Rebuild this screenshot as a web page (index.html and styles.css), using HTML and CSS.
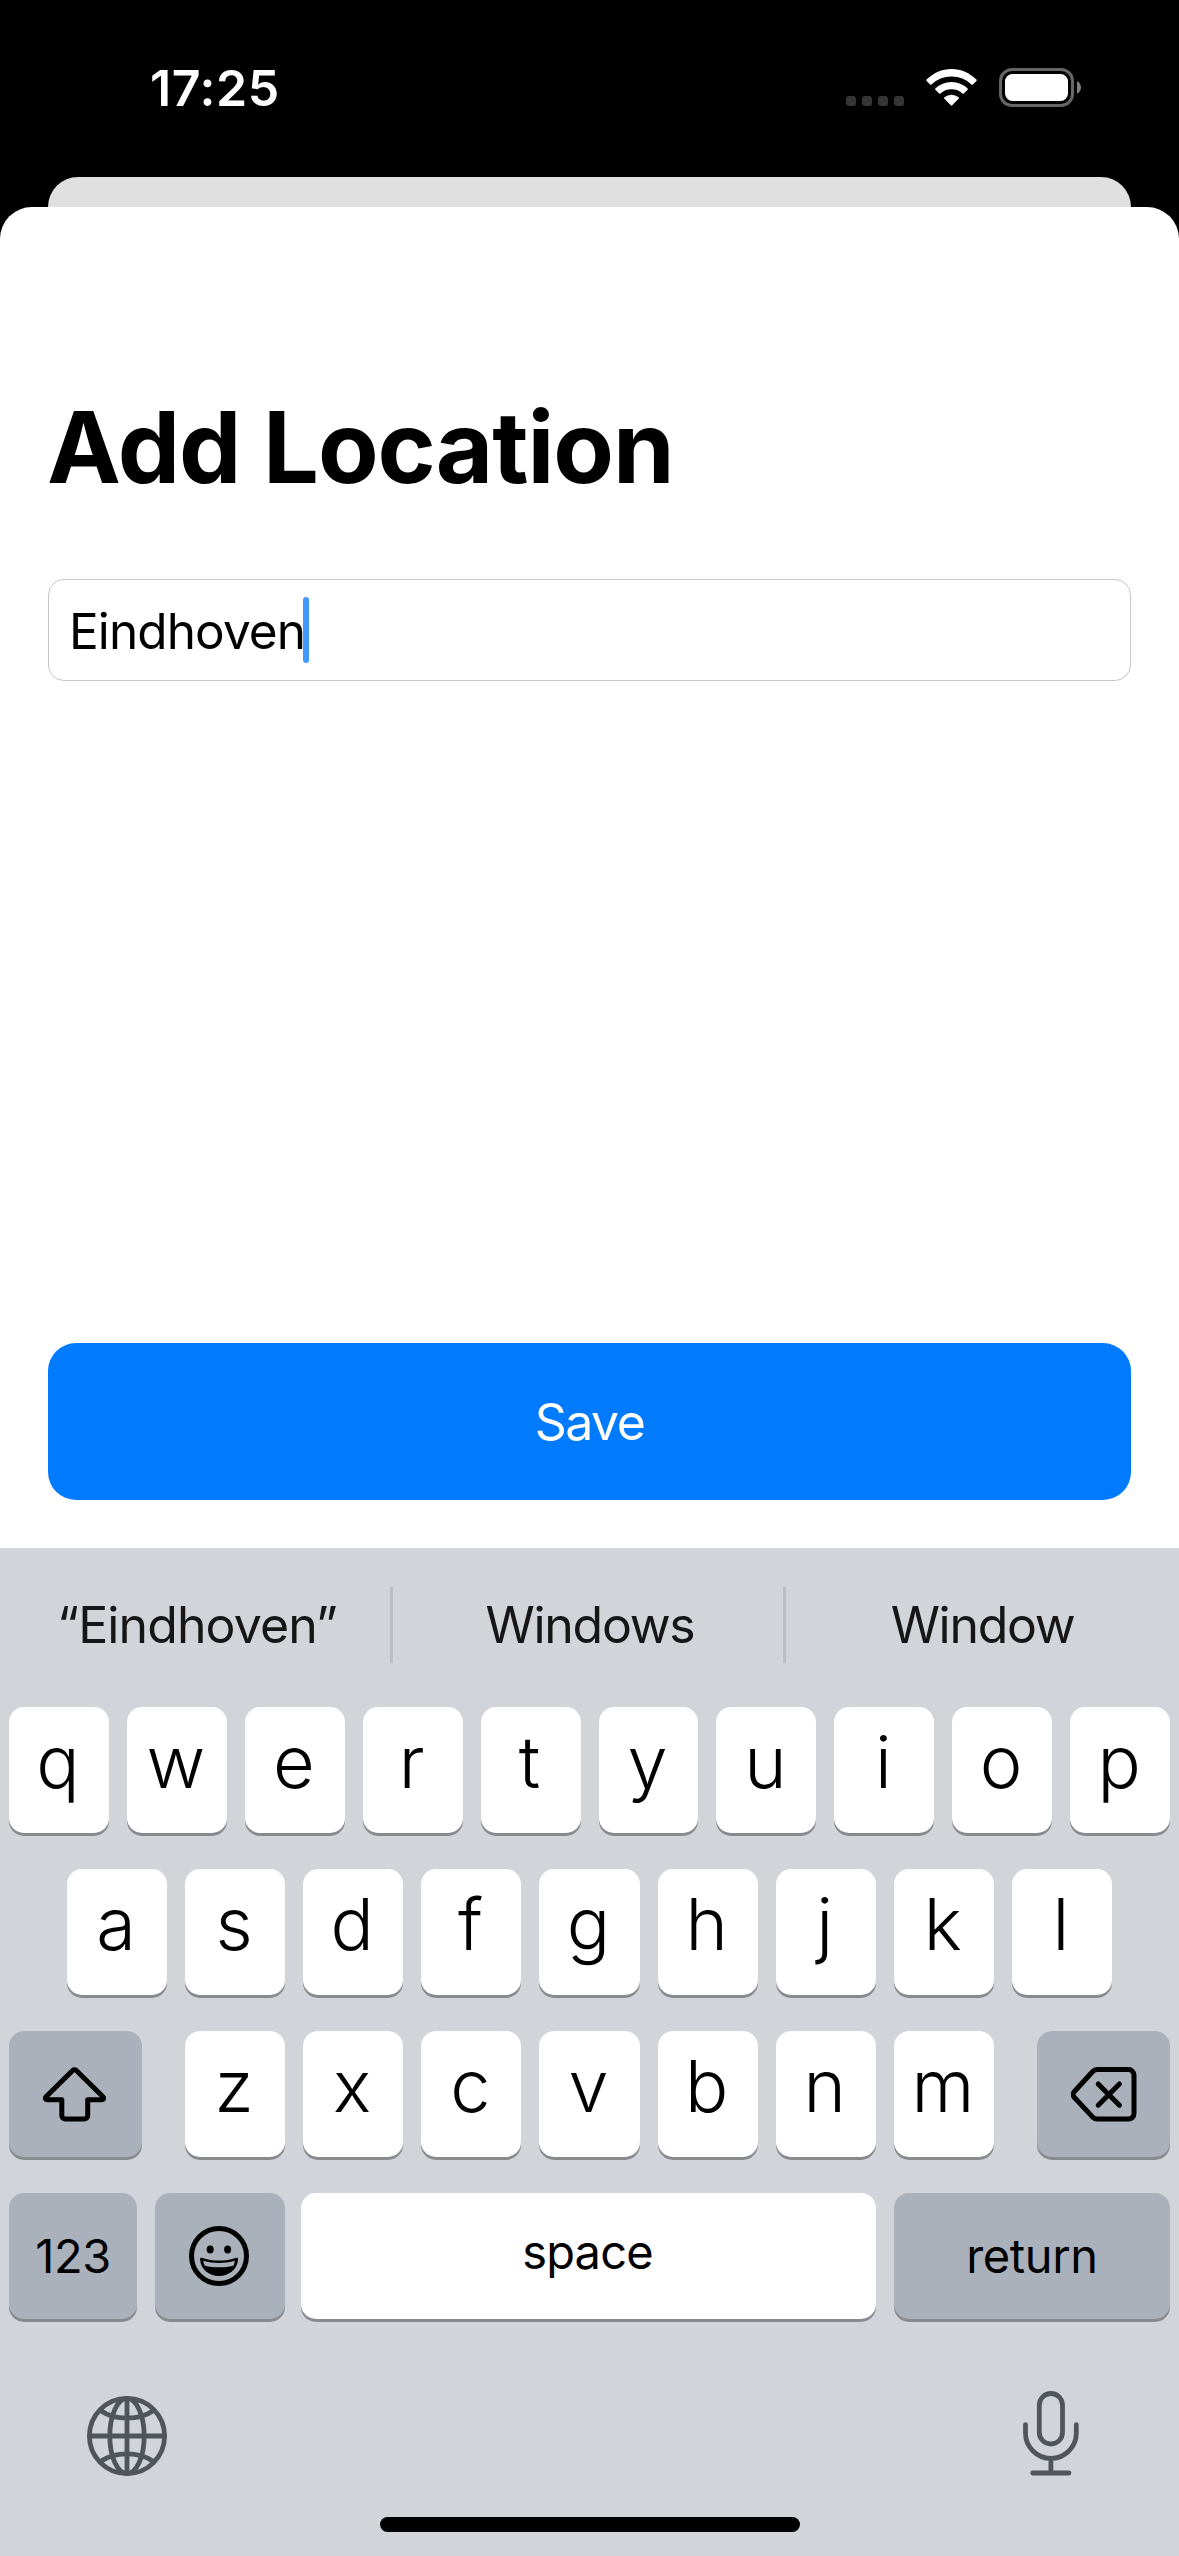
FILE: index.html
```html
<!DOCTYPE html>
<html lang="en">
<head>
<meta charset="utf-8">
<title>Add Location</title>
<link rel="stylesheet" href="styles.css">
</head>
<body>
<div class="phone">
  <header class="status-bar">
    <time class="clock">17:25</time>
    <div class="indicators">
      <div class="cellular"><i></i><i></i><i></i><i></i></div>
      <svg class="wifi" width="51" height="37" viewBox="0 0 51 37">
        <path d="M.6 11.9a.9.9 0 0 1 0-1.3C7.200 4 16 0 25.500 0S43.800 4 50.400 10.600a.9.9 0 0 1 0 1.300l-3.500 3.500a1 1 0 0 1-1.400 0A28.500 28.500 0 0 0 25.500 7.400 28.500 28.500 0 0 0 5.500 15.400a1 1 0 0 1-1.400 0z"/>
        <path d="M9.400 20.800a1 1 0 0 1 0-1.400A23 23 0 0 1 25.500 12.900 23 23 0 0 1 41.600 19.400a1 1 0 0 1 0 1.400l-3.700 3.700a1 1 0 0 1-1.300 0A16 16 0 0 0 25.500 20.200a16 16 0 0 0-11.100 4.300 1 1 0 0 1-1.300 0z"/>
        <path d="M18.400 29.800a1 1 0 0 1 0-1.500 11 11 0 0 1 14.200 0 1 1 0 0 1 0 1.500l-6.400 6.500a1 1 0 0 1-1.400 0z"/>
      </svg>
      <svg class="battery" width="82" height="39" viewBox="0 0 82 39">
        <rect class="battery-case" x="1.500" y="1.500" width="72" height="36" rx="11.500"/>
        <rect class="battery-fill" x="6" y="6" width="63" height="27" rx="7.500"/>
        <path class="battery-tip" d="M78 13.300c2.400 1 4 3.400 4 6.200s-1.600 5.200-4 6.200z"/>
      </svg>
    </div>
  </header>

  <div class="back-card"></div>

  <main class="sheet">
    <h1 class="title">Add Location</h1>
    <div class="field"><span class="value">Eindhoven</span><span class="caret"></span></div>
    <button class="save" type="button">Save</button>
  </main>

  <section class="keyboard">
    <div class="suggestions">
      <span class="s1">“Eindhoven”</span>
      <span class="s2">Windows</span>
      <span class="s3">Window</span>
    </div>
    <div class="keys">
      <div class="row">
        <b class="key">q</b><b class="key">w</b><b class="key">e</b><b class="key">r</b><b class="key">t</b><b class="key">y</b><b class="key">u</b><b class="key">i</b><b class="key">o</b><b class="key">p</b>
      </div>
      <div class="row row-home">
        <b class="key">a</b><b class="key">s</b><b class="key">d</b><b class="key">f</b><b class="key">g</b><b class="key">h</b><b class="key">j</b><b class="key">k</b><b class="key">l</b>
      </div>
      <div class="row row-shift">
        <b class="key key-side key-shift">
          <svg width="63" height="55" viewBox="0 0 63 55">
            <path class="line" d="M29.900 3.300a2.300 2.300 0 0 1 3.200 0L60 29.800c1.300 1.300.7 2.900-.9 2.900H44.700V48.500a3.500 3.500 0 0 1-3.500 3.500H22.300a3.500 3.500 0 0 1-3.500-3.500V32.700H3.900c-1.600 0-2.200-1.600-.9-2.900z"/>
          </svg>
        </b>
        <div class="row letters">
          <b class="key">z</b><b class="key">x</b><b class="key">c</b><b class="key">v</b><b class="key">b</b><b class="key">n</b><b class="key">m</b>
        </div>
        <b class="key key-side">
          <svg width="66" height="55" viewBox="0 0 66 55">
            <path class="line" d="M26.500 2.600H57.500a5.500 5.500 0 0 1 5.500 5.500V46.500a5.500 5.500 0 0 1-5.500 5.500H26.500a7 7 0 0 1-5-2.100L3.400 30.500a4.300 4.300 0 0 1 0-6L21.500 4.700a7 7 0 0 1 5-2.100z"/>
            <path class="line" d="M27.200 17 48.400 38.200M48.400 17 27.200 38.200"/>
          </svg>
        </b>
      </div>
      <div class="row row-bottom">
        <b class="key key-gray key-123">123</b>
        <b class="key key-gray key-emoji">
          <svg width="60" height="60" viewBox="0 0 60 60">
            <circle class="line" cx="30" cy="30" r="27.500"/>
            <ellipse cx="21.200" cy="23.500" rx="3.500" ry="4"/>
            <ellipse cx="38.600" cy="23.500" rx="3.500" ry="4"/>
            <path fill-rule="evenodd" d="M12.800 31.700c11 3.800 23.600 3.800 34.600 0 1-.3 1.800.4 1.700 1.600C48.300 43.500 40 50 30 50S11.800 43.500 11 33.300c-.1-1.200.8-1.900 1.800-1.600zM14.200 34.800c.3 2.200.9 3.600 1.800 4.900 9 2 19.400 2 28.200 0 .9-1.300 1.400-2.700 1.600-4.900-10.200 2.900-21.400 2.900-31.600 0z"/>
          </svg>
        </b>
        <b class="key key-space">space</b>
        <b class="key key-gray key-return">return</b>
      </div>
    </div>
    <div class="dock">
      <svg class="globe" width="80" height="80" viewBox="0 0 80 80">
        <circle cx="40" cy="40" r="37.600"/>
        <ellipse cx="40" cy="40" rx="17.200" ry="37.600"/>
        <path d="M40 2.500V77.500M2.500 40H77.500M13.500 14.500C28 24.700 52 24.700 66.500 14.500M13.500 65.500C28 55.300 52 55.300 66.500 65.500"/>
      </svg>
      <svg class="mic" width="56" height="85" viewBox="0 0 56 85">
        <rect x="16.300" y="2.500" width="23.200" height="50.500" rx="11.600"/>
        <path d="M2.500 33.700V42a25.400 25.400 0 0 0 50.800 0V33.700M27.900 67.500V82M9.700 82H46"/>
      </svg>
    </div>
    <div class="home-indicator"></div>
  </section>
</div>
</body>
</html>
```
FILE: styles.css
```css
* {
  box-sizing: border-box;
}

body {
  margin: 0;
  background: #000;
  font-family: Inter, "Liberation Sans", sans-serif;
  color: #000;
}

.phone {
  width: 1179px;
  height: 2556px;
  display: flex;
  flex-direction: column;
  overflow: hidden;
}

/* Status bar */
.status-bar {
  height: 177px;
  padding: 58px 98px 0 150px;
  display: flex;
  justify-content: space-between;
  align-items: flex-start;
}

.clock {
  font-size: 50px;
  line-height: 60px;
  font-weight: 600;
  letter-spacing: 0.6px;
  color: #fff;
}

.indicators {
  display: flex;
  padding-top: 10px;
}

.cellular {
  display: flex;
  gap: 6px;
  margin: 28px 22px 0 0;
}

.cellular i {
  width: 10px;
  height: 10px;
  border-radius: 3.5px;
  background: #363636;
}

.wifi {
  fill: #fff;
  margin: 1px 22px 0 0;
}

.battery-case {
  fill: none;
  stroke: #666;
  stroke-width: 3;
}

.battery-fill {
  fill: #fff;
}

.battery-tip {
  fill: #808080;
}

/* Sheet */
.back-card {
  height: 30px;
  margin: 0 48px;
  border-radius: 30px 30px 0 0;
  background: #e0e0e0;
}

.sheet {
  height: 1341px;
  padding: 180px 48px 48px;
  display: flex;
  flex-direction: column;
  background: #fff;
  border-radius: 32px 32px 0 0;
}

.title {
  margin: 0 0 0 -1px;
  font-size: 99px;
  line-height: 120px;
  font-weight: 700;
  letter-spacing: -1px;
}

.field {
  height: 102px;
  margin-top: 72px;
  padding: 0 20px;
  display: flex;
  align-items: center;
  border: 1px solid #c6c6c6;
  border-radius: 16px;
}

.value {
  padding-top: 1px;
  font-size: 49.5px;
  line-height: 60px;
  letter-spacing: -0.9px;
}

.caret {
  width: 6px;
  height: 66px;
  margin-left: -2px;
  border-radius: 3px;
  background: #4299ff;
}

.save {
  height: 157px;
  margin-top: auto;
  padding: 0;
  border: 0;
  border-radius: 28px;
  background: #007bff;
  color: #fff;
  font-family: inherit;
  font-size: 50px;
  letter-spacing: -1.5px;
}

/* Keyboard */
.keyboard {
  height: 1008px;
  display: flex;
  flex-direction: column;
  background: #d1d4d9;
}

.suggestions {
  height: 75px;
  margin-top: 39px;
  display: grid;
  grid-template-columns: 393px 393px 393px;
  align-items: stretch;
  font-size: 50px;
  line-height: 76px;
  letter-spacing: -1.3px;
  text-align: center;
  color: #161616;
}

.s1,
.s2 {
  padding-left: 4px;
  border-right: 3px solid #bbbec3;
}

.s1 {
  letter-spacing: -0.9px;
}

.keys {
  margin-top: 45px;
  padding: 0 9px;
  display: flex;
  flex-direction: column;
  gap: 36px;
}

.row {
  display: flex;
  gap: 18px;
}

.row-home {
  padding: 0 58px;
}

.row-shift {
  gap: 0;
  justify-content: space-between;
}

.letters {
  width: 809px;
}

.key {
  flex: 1 1 0;
  height: 126px;
  padding: 0 2px 16px 0;
  display: flex;
  align-items: center;
  justify-content: center;
  border-radius: 15px;
  background: #fff;
  box-shadow: 0 3px 0 #898a8d;
  font-size: 72px;
  line-height: 84px;
  font-weight: 350;
}

.key-side,
.key-gray {
  padding: 0;
  background: #abb1bb;
}

.key-side {
  flex: none;
  width: 133px;
}

.key-shift {
  padding-right: 2px;
}

.row-bottom {
  gap: 0;
}

.key-123,
.key-return,
.key-space {
  font-size: 47px;
  font-weight: 400;
  letter-spacing: -0.4px;
}

.key-123 {
  flex: none;
  width: 128px;
  margin-right: 18px;
}

.key-emoji {
  flex: none;
  width: 130px;
  margin-right: 16px;
  padding-right: 2px;
}

.key-space {
  padding: 0 2px 8px 0;
  margin-right: 18px;
  letter-spacing: -0.8px;
}

.key-return {
  flex: none;
  width: 276px;
}

.line {
  fill: none;
  stroke: #000;
  stroke-width: 5;
  stroke-linecap: round;
  stroke-linejoin: round;
}

.dock {
  margin-top: 71px;
  padding: 0 100px 0 87px;
  display: flex;
  justify-content: space-between;
  align-items: flex-start;
}

.globe,
.mic {
  fill: none;
  stroke: #50555c;
  stroke-width: 4.8;
  stroke-linecap: round;
}

.globe {
  margin-top: 6px;
}

.mic {
  margin-top: 1px;
}

.home-indicator {
  width: 420px;
  height: 15px;
  margin: 41px auto 0;
  border-radius: 8px;
  background: #000;
}
```
